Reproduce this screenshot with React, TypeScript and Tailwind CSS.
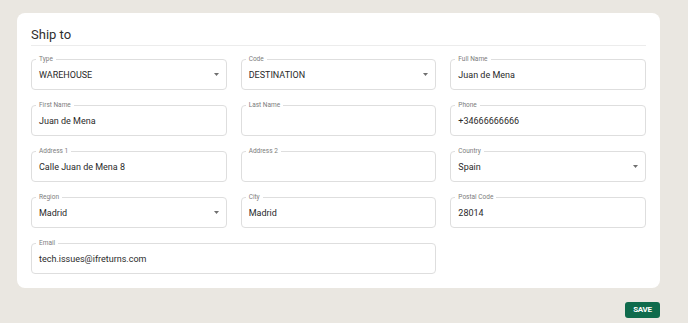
import React from "react";

type F = { label: string; value?: string; select?: boolean; span?: boolean };

const fields: F[] = [
  { label: "Type", value: "WAREHOUSE", select: true },
  { label: "Code", value: "DESTINATION", select: true },
  { label: "Full Name", value: "Juan de Mena" },
  { label: "First Name", value: "Juan de Mena" },
  { label: "Last Name", value: "" },
  { label: "Phone", value: "+34666666666" },
  { label: "Address 1", value: "Calle Juan de Mena 8" },
  { label: "Address 2", value: "" },
  { label: "Country", value: "Spain", select: true },
  { label: "Region", value: "Madrid", select: true },
  { label: "City", value: "Madrid" },
  { label: "Postal Code", value: "28014" },
  { label: "Email", value: "tech.issues@ifreturns.com", span: true },
];

function Field({ f }: { f: F }) {
  return (
    <div
      className={
        "relative h-[31px] rounded-[4px] border border-[#dedede] flex items-center pl-[7px] pr-[7px] " +
        (f.span ? "col-span-2" : "")
      }
    >
      <span className="absolute left-[4px] top-[-6px] bg-white px-[3px] text-[6.5px] leading-[10px] text-[#7d7d7d]">
        {f.label}
      </span>
      <span className="flex-1 text-[9px] leading-[12px] text-[#2a2a2a]">{f.value}</span>
      {f.select && (
        <svg width="5" height="3" viewBox="0 0 5 3">
          <path d="M0 0 L5 0 L2.5 3 Z" fill="#6f6f6f" />
        </svg>
      )}
    </div>
  );
}

export default function App() {
  return (
    <div
      className="w-[688px] h-[323px] bg-[#eae7e1] pt-[13px] pl-[17px] pr-[28px]"
      style={{ fontFamily: "Roboto, 'Liberation Sans', sans-serif" }}
    >
      <div className="bg-white rounded-[8px] pt-[14px] px-[14px] pb-[14px]">
        <div className="text-[13px] leading-[15px] text-[#2f2f2f]">Ship to</div>
        <div className="mt-[3px] h-px bg-[#ececec]" />
        <div className="mt-[13px] grid grid-cols-3 gap-x-[14px] gap-y-[15px]">
          {fields.map((f) => (
            <Field key={f.label} f={f} />
          ))}
        </div>
      </div>
      <div className="flex justify-end mt-[14px]">
        <button className="w-[35px] h-[16px] rounded-[3px] bg-[#0f6b4c] text-white text-[8px] font-bold leading-none flex items-center justify-center tracking-[-0.3px]">
          SAVE
        </button>
      </div>
    </div>
  );
}
